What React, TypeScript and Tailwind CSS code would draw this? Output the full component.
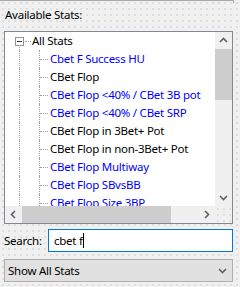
import React from "react";

const rows = [
  { t: "Cbet F Success HU", blue: true },
  { t: "CBet Flop", blue: false },
  { t: "CBet Flop <40% / CBet 3B pot", blue: true },
  { t: "CBet Flop <40% / CBet SRP", blue: true },
  { t: "CBet Flop in 3Bet+ Pot", blue: false },
  { t: "CBet Flop in non-3Bet+ Pot", blue: false },
  { t: "CBet Flop Multiway", blue: true },
  { t: "CBet Flop SBvsBB", blue: true },
  { t: "CBet Flop Size 3BP", blue: true },
];

const dots =
  "bg-[#f0f0f0] bg-[radial-gradient(#dedede_0.8px,transparent_0.8px)] bg-[size:6px_6px]";

function Chevron({ dir }: { dir: "up" | "down" | "left" | "right" }) {
  const pts = {
    up: "1,6 4.5,2.5 8,6",
    down: "1,3 4.5,6.5 8,3",
    left: "6,1 2.5,4.5 6,8",
    right: "3,1 6.5,4.5 3,8",
  }[dir];
  return (
    <svg width="9" height="9" viewBox="0 0 9 9">
      <polyline points={pts} fill="none" stroke="#606060" strokeWidth="1.6" />
    </svg>
  );
}

export default function App() {
  return (
    <div
      className={`w-[240px] h-[287px] overflow-hidden text-[11.5px] tracking-[-0.25px] text-black ${dots}`}
      style={{ fontFamily: '"Noto Sans", "Open Sans", sans-serif' }}
    >
      <div className="h-[3px] w-[234px] border-t border-r border-[#a9a9a9]" />
      <div className="mt-[4px] pl-[5px] h-[16px] leading-[16px]">Available Stats:</div>

      <div className="mt-[8px] ml-[4px] w-[229px] h-[193px] border border-[#828790] bg-white flex flex-col">
        <div className="flex flex-1 min-h-0">
          <div className="flex-1 overflow-hidden">
            <div className="flex items-center h-[18px]">
              <div className="w-[10px]" />
              <div className="relative w-[9px] h-full flex items-center">
                <div className="w-[9px] h-[9px] border border-[#919191] flex items-center justify-center">
                  <div className="w-[5px] h-px bg-[#3c3c3c]" />
                </div>
                <div className="absolute left-[4px] top-[13px] h-[5px] border-l border-dotted border-[#a0a0a0]" />
              </div>
              <div className="w-[6px] ml-px border-t border-dotted border-[#a0a0a0]" />
              <div className="pl-[1px] whitespace-nowrap">All Stats</div>
            </div>
            {rows.map((r) => (
              <div key={r.t} className="flex h-[18px]">
                <div className="w-[14px]" />
                <div className="w-[20px] h-full border-l border-dotted border-[#a0a0a0]" />
                <div className="w-[9px] h-full border-l border-dotted border-[#a0a0a0] flex items-center">
                  <div className="w-full border-t border-dotted border-[#a0a0a0]" />
                </div>
                <div
                  className={`pl-[2px] whitespace-nowrap leading-[18px] ${
                    r.blue ? "text-[#0000ff]" : "text-black"
                  }`}
                >
                  {r.t}
                </div>
              </div>
            ))}
          </div>
          <div className="w-[17px] flex flex-col bg-[#f0f0f0]">
            <div className="h-[17px] flex items-center justify-center">
              <Chevron dir="up" />
            </div>
            <div className="h-[51px] bg-[#cdcdcd]" />
            <div className="flex-1" />
            <div className="h-[17px] flex items-center justify-center">
              <Chevron dir="down" />
            </div>
          </div>
        </div>
        <div className="h-[17px] flex">
          <div className="flex-1 flex bg-[#f0f0f0]">
            <div className="w-[17px] flex items-center justify-center">
              <Chevron dir="left" />
            </div>
            <div className="w-[149px] bg-[#cdcdcd]" />
            <div className="flex-1" />
            <div className="w-[17px] flex items-center justify-center">
              <Chevron dir="right" />
            </div>
          </div>
          <div className={`w-[17px] ${dots}`} />
        </div>
      </div>

      <div className="mt-[5px] flex items-center h-[23px]">
        <div className="pl-[4px] w-[48px]">Search:</div>
        <div className="w-[185px] h-[23px] border border-[#0078d7] bg-white flex items-center pl-[5px]">
          <span>cbet f</span>
          <span className="w-px h-[15px] bg-black" />
        </div>
      </div>

      <div className="mt-[7px] ml-[4px] w-[229px] h-[23px] border border-[#adadad] bg-[#e1e1e1] flex items-center pl-[3px] pr-[5px]">
        <span className="flex-1">Show All Stats</span>
        <Chevron dir="down" />
      </div>
    </div>
  );
}
